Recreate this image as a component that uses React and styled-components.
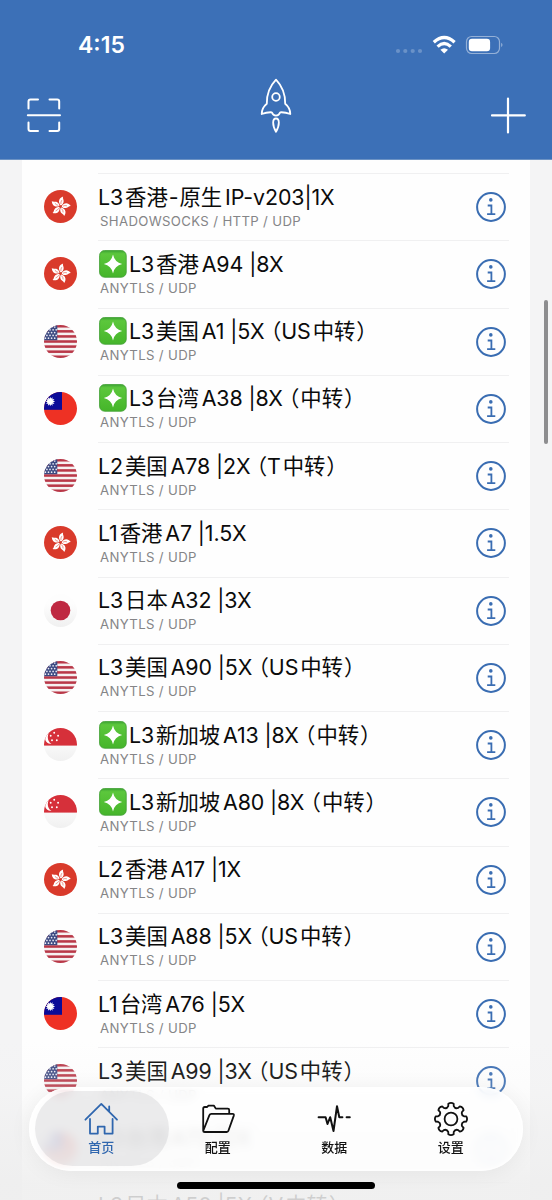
import React from 'react';
import styled, { createGlobalStyle } from 'styled-components';

const GlobalStyle = createGlobalStyle`
  * {
    box-sizing: border-box;
  }

  body {
    margin: 0;
    background: #f4f4f5;
    font-family: Inter, 'Noto Sans CJK SC', sans-serif;
    -webkit-font-smoothing: antialiased;
  }
`;

const Screen = styled.div`
  position: relative;
  display: flex;
  flex-direction: column;
  width: 552px;
  height: 1200px;
  overflow: hidden;
  background: #f4f4f5;
`;

const Header = styled.header`
  flex: none;
  height: 160px;
  background: #3c70b7;
  border-bottom: 1px solid #6d93c4;
  color: #fff;
`;

const StatusBar = styled.div`
  display: flex;
  align-items: center;
  justify-content: space-between;
  height: 72px;
  padding: 18px 48px 0 78px;
`;

const Clock = styled.span`
  font-size: 23px;
  font-weight: 600;
  line-height: 28px;
  letter-spacing: 0;
`;

const NavBar = styled.nav`
  display: flex;
  align-items: center;
  justify-content: space-between;
  height: 87px;
  padding: 0 25px 0 25px;
`;

const Content = styled.main`
  flex: 1;
  min-height: 0;
  padding: 0 22px;
  overflow: hidden;
`;

const Card = styled.div`
  padding-top: 13px;
  background: #fefefe;
`;

const Row = styled.div`
  display: flex;
  align-items: center;
  height: 67.25px;
  padding-left: 22px;
`;

const FlagBox = styled.div`
  flex: none;
  width: 33px;
  height: 33px;
  margin-right: 21px;
  border-radius: 50%;
  overflow: hidden;

  svg {
    display: block;
  }
`;

const RowBody = styled.div`
  display: flex;
  align-items: center;
  justify-content: space-between;
  flex: 1;
  height: 100%;
  margin-right: 21px;
  padding-right: 2px;
  border-top: 1px solid #f0f0f1;
`;

const RowText = styled.div`
  padding-bottom: 2px;
`;

const Title = styled.div`
  display: flex;
  align-items: center;
  height: 28px;
  font-size: 21.4px;
  line-height: 28px;
  letter-spacing: -0.1px;
  color: #0b0b0b;
  white-space: pre;

  svg {
    flex: none;
    margin: 0 2px 0 1px;
  }
`;

const Han = styled.span`
  margin: 0 ${props => (props.$last ? 1 : 3)}px 0 ${props => (props.$tight ? 1 : 2)}px;
`;

const Paren = styled.span`
  margin-left: ${props => (props.$open ? 6 : 0)}px;
  font-feature-settings: 'halt';
`;

const Protocols = styled.div`
  margin-top: 1px;
  padding-left: 2px;
  font-size: 13.2px;
  line-height: 18px;
  letter-spacing: 0.35px;
  color: #858587;
`;

const BottomFade = styled.div`
  position: absolute;
  left: 0;
  right: 0;
  bottom: 0;
  height: 160px;
  background: linear-gradient(
    rgba(240, 240, 240, 0),
    rgba(239, 239, 239, 0.14) 30%,
    rgba(238, 238, 238, 0.45) 55%,
    rgba(238, 238, 238, 0.86) 90%
  );
`;

const TabBar = styled.div`
  position: absolute;
  left: 29px;
  bottom: 29px;
  display: flex;
  width: 494px;
  height: 84px;
  padding: 4px 14px;
  border-radius: 42px;
  background: rgba(255, 255, 255, 0.8);
  backdrop-filter: blur(5px);
  box-shadow: 0 2px 22px rgba(0, 0, 0, 0.06), inset 0 0 3px 1px #fff;
`;

const Tab = styled.div`
  position: relative;
  display: flex;
  flex-direction: column;
  align-items: center;
  flex: 1;
  padding-top: 10px;
  font-size: 13px;
  font-weight: 500;
  line-height: 18px;
  color: ${props => (props.$active ? '#2f66ae' : '#111')};

  svg {
    position: relative;
    display: block;
    margin-bottom: 1px;
  }

  span {
    position: relative;
  }

  &::before {
    content: '';
    display: ${props => (props.$active ? 'block' : 'none')};
    position: absolute;
    inset: 0 -9px 1px -8px;
    border-radius: 38px;
    background: rgba(120, 120, 124, 0.14);
  }
`;

const HomeIndicator = styled.div`
  position: absolute;
  left: 177px;
  bottom: 11px;
  width: 198px;
  height: 7px;
  border-radius: 4px;
  background: #000;
`;

const ScrollThumb = styled.div`
  position: absolute;
  top: 300px;
  right: 4px;
  width: 4px;
  height: 144px;
  border-radius: 2px;
  background: #8d8d8f;
`;

const nodes = [
  { flag: 'hk', name: 'L3香港-原生IP-v203|1X', protocols: 'SHADOWSOCKS / HTTP / UDP' },
  { flag: 'hk', spark: true, name: 'L3香港A94 |8X' },
  { flag: 'us', spark: true, name: 'L3美国A1 |5X（US中转）' },
  { flag: 'tw', spark: true, name: 'L3台湾A38 |8X（中转）' },
  { flag: 'us', name: 'L2美国A78 |2X（T中转）' },
  { flag: 'hk', name: 'L1香港A7 |1.5X' },
  { flag: 'jp', name: 'L3日本A32 |3X' },
  { flag: 'us', name: 'L3美国A90 |5X（US中转）' },
  { flag: 'sg', spark: true, name: 'L3新加坡A13 |8X（中转）' },
  { flag: 'sg', spark: true, name: 'L3新加坡A80 |8X（中转）' },
  { flag: 'hk', name: 'L2香港A17 |1X' },
  { flag: 'us', name: 'L3美国A88 |5X（US中转）' },
  { flag: 'tw', name: 'L1台湾A76 |5X' },
  { flag: 'us', name: 'L3美国A99 |3X（US中转）' },
  { flag: 'tw', name: 'L3台湾A72 |2X' },
  { flag: 'jp', name: 'L3日本A50 |5X（V中转）' },
];

function HongKong() {
  return (
    <>
      <rect width="33" height="33" fill="#d93a2b" />
      {[0, 72, 144, 216, 288].map(angle => (
        <g key={angle} transform={`rotate(${angle + 12} 16.5 16.5)`}>
          <path d="M16.3 15.2C13 12.8 13 8.6 17 6.2C16.6 8.2 19.2 9.6 18.5 12.4C18.1 14.2 17.2 15 16.3 15.2Z" fill="#fff" />
          <path d="M16.4 14Q15.6 12 16.5 10" fill="none" stroke="#d93a2b" strokeWidth="0.5" />
        </g>
      ))}
    </>
  );
}

function UnitedStates() {
  return (
    <>
      <rect width="33" height="33" fill="#f6f1f1" />
      {[0, 1, 2, 3, 4, 5, 6].map(i => (
        <rect key={i} y={i * 5.08} width="33" height="2.54" fill="#b93848" />
      ))}
      <rect width="13.3" height="15.2" fill="#3d4a82" />
      {[0, 1, 2, 3, 4].map(r =>
        [0, 1, 2, 3].map(c => (
          <circle key={`${r}-${c}`} cx={1.4 + c * 3.1 + (r % 2) * 1.5} cy={2 + r * 2.8} r="0.85" fill="#e9ebf4" />
        ))
      )}
    </>
  );
}

function Taiwan() {
  return (
    <>
      <rect width="33" height="33" fill="#ee3124" />
      <rect width="18" height="17.8" fill="#0b0b98" />
      <g fill="#fff">
        <circle cx="6.3" cy="9.5" r="2.7" />
        {[0, 30, 60, 90, 120, 150, 180, 210, 240, 270, 300, 330].map(angle => (
          <path key={angle} d="M5.4 7.2L6.3 4.7L7.2 7.2Z" transform={`rotate(${angle} 6.3 9.5)`} />
        ))}
      </g>
    </>
  );
}

function Japan() {
  return (
    <>
      <rect width="33" height="33" fill="url(#pearl)" />
      <circle cx="16.5" cy="16.5" r="9.8" fill="#bf2942" />
    </>
  );
}

function Singapore() {
  return (
    <>
      <rect width="33" height="33" fill="url(#pearl)" />
      <rect width="33" height="17.6" fill="#d6303a" />
      <path d="M4.8 5C-1 9 .5 16 7.5 16C3.8 13.5 2.8 9 4.8 5Z" fill="#fff" />
      {[[10.2, 4.8], [6.7, 7.7], [14.1, 7.8], [8, 12.3], [12.8, 12.3]].map(([x, y]) => (
        <circle key={`${x}-${y}`} cx={x} cy={y} r="0.95" fill="#fff" />
      ))}
    </>
  );
}

const flags = {
  hk: HongKong,
  us: UnitedStates,
  tw: Taiwan,
  jp: Japan,
  sg: Singapore,
};

function Flag({ code }) {
  const Drawing = flags[code];
  return (
    <FlagBox>
      <svg width="33" height="33" viewBox="0 0 33 33">
        <defs>
          <linearGradient id="pearl" x1="0" y1="0" x2="0" y2="1">
            <stop offset="0.3" stopColor="#fdfdfd" />
            <stop offset="1" stopColor="#f0f0f0" />
          </linearGradient>
        </defs>
        <Drawing />
      </svg>
    </FlagBox>
  );
}

function SparkBadge() {
  return (
    <svg width="28" height="28" viewBox="0 0 28 28">
      <defs>
        <linearGradient id="leaf" x1="0" y1="0" x2="0" y2="1">
          <stop offset="0" stopColor="#3fa535" />
          <stop offset="0.12" stopColor="#5cc73c" />
          <stop offset="1" stopColor="#45b52a" />
        </linearGradient>
      </defs>
      <rect x="0.6" y="0.6" width="26.6" height="26.6" rx="5" fill="url(#leaf)" stroke="#43a136" strokeWidth="0.9" />
      <path d="M14 4.6Q15.6 12.4 23.2 14Q15.6 15.6 14 23.4Q12.4 15.6 4.8 14Q12.4 12.4 14 4.6Z" fill="#fff" />
    </svg>
  );
}

function InfoIcon() {
  return (
    <svg width="32" height="32" viewBox="0 0 32 32" fill="none" stroke="#3a6db2" strokeWidth="2">
      <circle cx="16" cy="16" r="13.9" />
      <circle cx="15.8" cy="8.9" r="1.8" fill="#3a6db2" stroke="none" />
      <path d="M12.7 14.5H16.4V23.2M12.1 23.2H20.3" strokeWidth="1.8" />
    </svg>
  );
}

function NodeName({ children }) {
  const parts = children.split(/([\u4e00-\u9fff]+|[（）])/).filter(Boolean);
  return parts.map((part, i) => {
    if (/[（）]/.test(part)) {
      return <Paren key={i} $open={part === '（'}>{part}</Paren>;
    }
    if (!/[\u4e00-\u9fff]/.test(part)) {
      return <span key={i}>{part}</span>;
    }
    const next = parts[i + 1] || '';
    const prev = parts[i - 1] || '';
    return (
      <Han key={i} $last={/^[-）]/.test(next)} $tight={/[-（]$/.test(prev)}>
        {part}
      </Han>
    );
  });
}

function NodeRow({ node }) {
  return (
    <Row>
      <Flag code={node.flag} />
      <RowBody>
        <RowText>
          <Title>
            {node.spark && <SparkBadge />}
            <NodeName>{node.name}</NodeName>
          </Title>
          <Protocols>{node.protocols || 'ANYTLS / UDP'}</Protocols>
        </RowText>
        <InfoIcon />
      </RowBody>
    </Row>
  );
}

function StatusIcons() {
  return (
    <svg width="110" height="20" viewBox="394 35 110 20" fill="#fff">
      {[398, 405.3, 412.7, 420].map(x => (
        <circle key={x} cx={x} cy="51" r="2.1" opacity="0.24" />
      ))}
      <g fill="none" stroke="#fff" strokeWidth="3.3">
        <path d="M433.8 42.2Q444.2 32.8 454.6 42.2" />
        <path d="M437.6 46.6Q444.2 40.6 450.8 46.6" />
      </g>
      <path d="M440.4 49.8Q444.2 46.6 448 49.8L444.2 53.6Z" />
      <rect x="466.5" y="36.5" width="33" height="17" rx="5.2" fill="none" stroke="#fff" strokeOpacity="0.45" strokeWidth="1.2" />
      <rect x="468.8" y="38.7" width="21.3" height="12.6" rx="3.2" />
      <path d="M501.3 42.8Q503.6 45 501.3 47.2Z" opacity="0.55" />
    </svg>
  );
}

function ScanIcon() {
  return (
    <svg width="37" height="37" viewBox="25 97.5 37 37" fill="none" stroke="#fff" strokeWidth="2" strokeLinecap="round">
      <path d="M28.5 109V102Q28.5 100 30.5 100H38M49.5 100H57.2Q59.2 100 59.2 102V109M28.5 123V129.5Q28.5 131.5 30.5 131.5H38M49.5 131.5H57.2Q59.2 131.5 59.2 129.5V123" />
      <path d="M27.8 115.7H60" />
    </svg>
  );
}

function RocketIcon() {
  return (
    <svg width="36" height="76" viewBox="258 78 36 76" fill="none" stroke="#fff" strokeWidth="1.8" strokeLinejoin="round">
      <path d="M276 79.7C270 86 266.6 94 266.8 103.8C263.4 106.6 261.8 110 261.7 114Q267 112 271.8 112.3Q273 115.6 276 115.6Q279 115.6 280.2 112.3Q285 112 290.3 114C290.2 110 288.6 106.6 285.2 103.8C285.4 94 282 86 276 79.7Z" />
      <circle cx="276" cy="97" r="3.8" />
      <path d="M276 118.5C272.4 118.5 272 124.5 276 131.8C280 124.5 279.6 118.5 276 118.5Z" />
    </svg>
  );
}

function PlusIcon() {
  return (
    <svg width="37" height="37" viewBox="0 0 37 37" stroke="#fff" strokeWidth="2.2" strokeLinecap="round">
      <path d="M18 1.6V35.4M2 18.4H34.8" />
    </svg>
  );
}

function TabIcon({ children }) {
  return (
    <svg width="36" height="36" viewBox="0 0 36 36" fill="none" stroke="currentColor" strokeWidth="1.8" strokeLinejoin="round" strokeLinecap="round">
      {children}
    </svg>
  );
}

const gearTeeth = [0, 45, 90, 135, 180, 225, 270, 315];

// one tooth and the valley after it, for each eighth of the wheel
function gearPath() {
  const point = (radius, angle) => {
    const rad = ((angle - 90) * Math.PI) / 180;
    return `${(18 + radius * Math.cos(rad)).toFixed(2)} ${(18 + radius * Math.sin(rad)).toFixed(2)}`;
  };
  const steps = gearTeeth.map((a, i) =>
    `${i === 0 ? 'M' : 'L'}${point(13.2, a - 12)} L${point(15.4, a - 10)} Q${point(17, a)} ${point(15.4, a + 10)} L${point(13.2, a + 12)} Q${point(10.8, a + 22.5)} ${point(13.2, a + 33)}`
  );
  return `${steps.join(' ')}Z`;
}

export default function App() {
  return (
    <>
      <GlobalStyle />
      <Screen>
        <Header>
          <StatusBar>
            <Clock>4:15</Clock>
            <StatusIcons />
          </StatusBar>
          <NavBar>
            <ScanIcon />
            <RocketIcon />
            <PlusIcon />
          </NavBar>
        </Header>
        <Content>
          <Card>
            {nodes.map(node => (
              <NodeRow key={node.name} node={node} />
            ))}
          </Card>
        </Content>
        <BottomFade />
        <TabBar>
          <Tab $active>
            <TabIcon>
              <path d="M2.4 18.7L18.3 2.9L34 18.7M7 18V32.6H14.8V25.6H21.6V32.6H29.6V18M26.2 10.4V5.4" />
            </TabIcon>
            <span>首页</span>
          </Tab>
          <Tab>
            <TabIcon>
              <path d="M3.2 30V7.5Q3.2 6 4.7 6H7.2L8.4 4.7H14L15.8 7.6H27.8Q29.2 7.6 29.2 9V12.8M3.2 30Q3.2 31 4.7 31H26.8Q28 31 28.4 29.8L33.8 14.6Q34.3 12.9 32.6 12.9H11.4Q9.9 12.9 9.3 14.3Z" />
            </TabIcon>
            <span>配置</span>
          </Tab>
          <Tab>
            <TabIcon>
              <path d="M2.6 16.2H9.6L11.5 23L14.2 16.2L17.5 30L21 5.2L23.3 16.2H26.4M30.6 16.2H33.8" strokeWidth="2" />
            </TabIcon>
            <span>数据</span>
          </Tab>
          <Tab>
            <TabIcon>
              <path d={gearPath()} />
              <circle cx="18" cy="18" r="6.4" />
            </TabIcon>
            <span>设置</span>
          </Tab>
        </TabBar>
        <HomeIndicator />
        <ScrollThumb />
      </Screen>
    </>
  );
}
